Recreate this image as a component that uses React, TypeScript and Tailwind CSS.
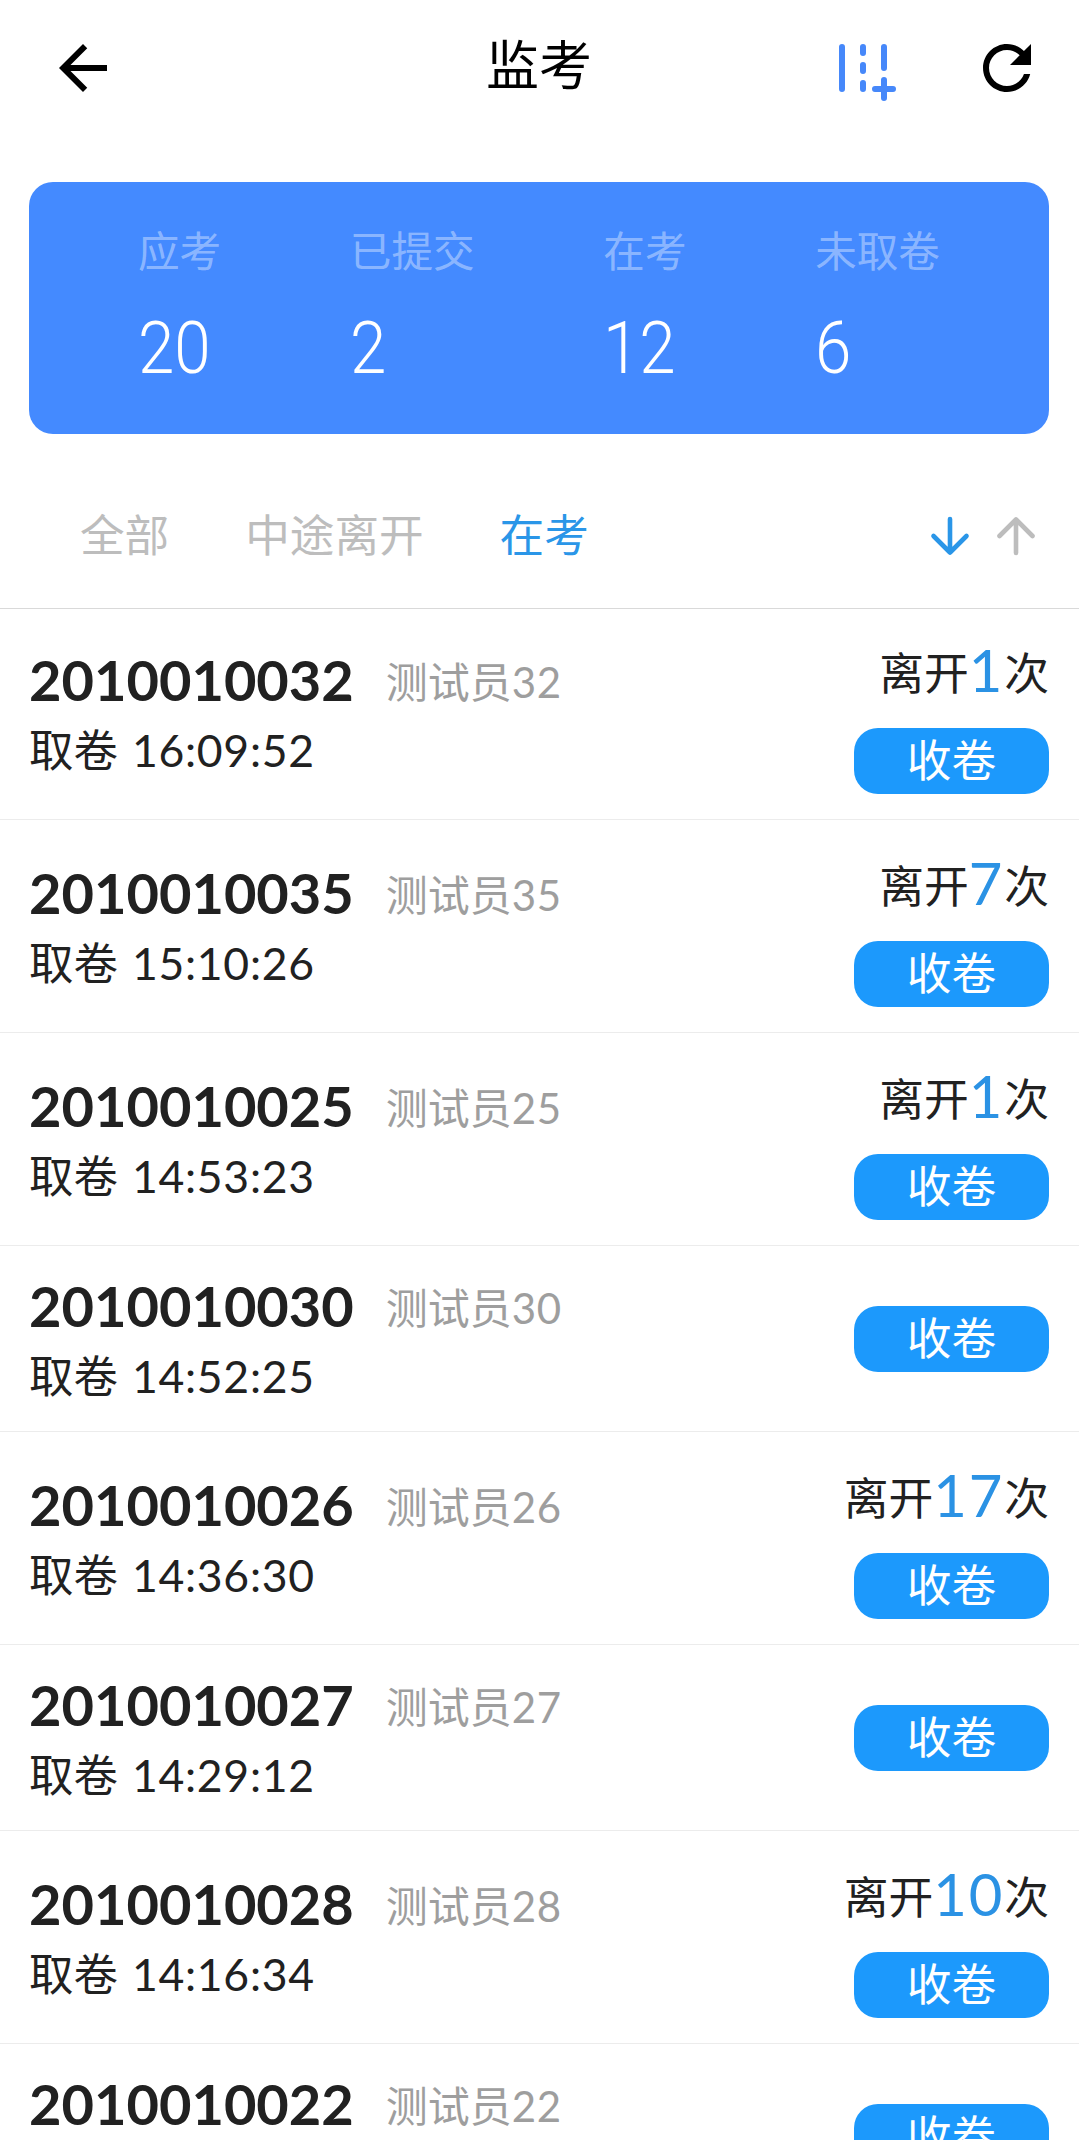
import React from "react";

type Student = {
  id: string;
  name: string;
  time?: string;
  leaves?: number;
};

const students: Student[] = [
  { id: "2010010032", name: "测试员32", time: "16:09:52", leaves: 1 },
  { id: "2010010035", name: "测试员35", time: "15:10:26", leaves: 7 },
  { id: "2010010025", name: "测试员25", time: "14:53:23", leaves: 1 },
  { id: "2010010030", name: "测试员30", time: "14:52:25" },
  { id: "2010010026", name: "测试员26", time: "14:36:30", leaves: 17 },
  { id: "2010010027", name: "测试员27", time: "14:29:12" },
  { id: "2010010028", name: "测试员28", time: "14:16:34", leaves: 10 },
  { id: "2010010022", name: "测试员22" },
];

const stats = [
  { label: "应考", value: 20 },
  { label: "已提交", value: 2 },
  { label: "在考", value: 12 },
  { label: "未取卷", value: 6 },
];

function BackIcon() {
  return (
    <svg viewBox="0 0 24 24" className="size-[72px] fill-black">
      <path d="M20 11H7.83l5.59-5.59L12 4l-8 8 8 8 1.41-1.41L7.83 13H20v-2z" />
    </svg>
  );
}

function RefreshIcon() {
  return (
    <svg viewBox="0 0 24 24" className="size-[72px] fill-black">
      <path d="M17.65 6.35C16.2 4.9 14.21 4 12 4c-4.42 0-7.99 3.58-7.99 8s3.57 8 7.99 8c3.73 0 6.84-2.55 7.73-6h-2.08c-.82 2.33-3.04 4-5.65 4-3.31 0-6-2.69-6-6s2.69-6 6-6c1.66 0 3.14.69 4.22 1.78L13 11h7V4l-2.35 2.35z" />
    </svg>
  );
}

function AddRoadIcon() {
  return (
    <svg
      viewBox="0 0 24 24"
      className="size-[72px] fill-none stroke-[#4688fa] stroke-2"
      strokeLinecap="round"
    >
      <path d="M5 5v14M12 5v2M12 11v2M12 17v2M19 5v7M19 16v6M16 19h6" />
    </svg>
  );
}

function SortArrow({ up = false }: { up?: boolean }) {
  return (
    <svg
      viewBox="0 0 40 40"
      className={
        up
          ? "size-10 fill-none stroke-[#bdbdbd] stroke-[4.6]"
          : "size-10 rotate-180 fill-none stroke-[#2a96e8] stroke-[4.6]"
      }
      strokeLinecap="round"
      strokeLinejoin="round"
    >
      <path d="M20 37V3.5M3.5 20L20 3.5L36.500 20" />
    </svg>
  );
}

function Row({ s }: { s: Student }) {
  return (
    <li
      className={
        s.leaves
          ? "flex h-[213px] shrink-0 items-center justify-between border-b border-[#ececec] pr-[30px] pl-[29px]"
          : "flex h-[186px] shrink-0 items-center justify-between border-b border-[#ececec] pr-[30px] pl-[29px]"
      }
    >
      <div className="h-[138px] whitespace-nowrap">
        <div className="flex h-[72px] items-center">
          <span className="text-[56px] leading-[72px] font-bold text-[#212121]">{s.id}</span>
          <span className="ml-[32px] pt-[4px] text-[42px] leading-[68px] text-[#9e9e9e]">
            {s.name.slice(0, 3)}
            <span className="tracking-[0.6px]">{s.name.slice(3)}</span>
          </span>
        </div>
        {s.time && (
          <div className="flex gap-[14px] text-[44.5px] leading-[67px] text-[#212121]">
            <span>取卷</span>
            <span className="tracking-[0.7px]">{s.time}</span>
          </div>
        )}
      </div>
      <div className="flex flex-col items-end">
        {s.leaves && (
          <div className="flex h-[96px] items-baseline text-[44.800px] leading-[76px] text-[#212121]">
            <span className="-translate-y-[2px]">离开</span>
            <span className="text-[58px] tracking-[1.800px] text-[#2b92e4]">{s.leaves}</span>
            <span className="-translate-y-[2px]">次</span>
          </div>
        )}
        <button className="h-[66px] w-[195px] rounded-[24px] bg-[#1c99fc] pb-[2px] text-[44.800px] leading-[64px] text-white">
          收卷
        </button>
      </div>
    </li>
  );
}

export default function App() {
  return (
    <main className="flex h-[2140px] w-[1079px] flex-col overflow-hidden bg-white font-['Lato','Noto_Sans_CJK_SC',sans-serif]">
      <header className="grid h-[182px] shrink-0 grid-cols-3 items-start pr-[36px] pl-[35px] pt-8">
        <div className="pl-3">
          <BackIcon />
        </div>
        <h1 className="text-center text-[53px] leading-[66px] text-black">监考</h1>
        <div className="flex justify-end gap-[72px]">
          <AddRoadIcon />
          <RefreshIcon />
        </div>
      </header>

      <section className="mr-[30px] ml-[29px] flex h-[252px] shrink-0 justify-between rounded-[24px] bg-[#448aff] pt-[38px] pr-[109px] pl-[109px]">
        {stats.map((s) => (
          <div key={s.label}>
            <div className="text-[41.600px] leading-[62px] text-white/40">{s.label}</div>
            <div className="mt-[25px] origin-left scale-x-[0.91] font-['Roboto'] text-[72px] leading-[84px] font-[340] text-white">
              {s.value}
            </div>
          </div>
        ))}
      </section>

      <nav className="-mb-[2px] flex h-[175px] shrink-0 items-center justify-between border-b border-[#d9d9d9] pt-[29px] pr-[43px] pl-[80px] text-[44.600px] text-[#bdbdbd]">
        <div className="flex gap-[76px]">
          <span>全部</span>
          <span>中途离开</span>
          <span className="text-[#2a96e8]">在考</span>
        </div>
        <div className="flex gap-[26px]">
          <SortArrow />
          <SortArrow up />
        </div>
      </nav>

      <ul className="flex flex-col">
        {students.map((s) => (
          <Row key={s.id} s={s} />
        ))}
      </ul>
    </main>
  );
}
